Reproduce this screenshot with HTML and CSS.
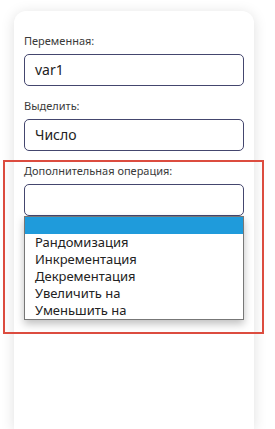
FILE: index.html
```html
<!DOCTYPE html>
<html lang="ru">
<head>
    <meta charset="UTF-8">
    <meta name="viewport" content="width=device-width, initial-scale=1.0">
    <title>Операция</title>
    <link rel="stylesheet" href="styles.css">
</head>
<body>
    <div class="card">
        <div class="field">
            <label class="label">Переменная:</label>
            <div class="input">var1</div>
        </div>

        <div class="field">
            <label class="label">Выделить:</label>
            <div class="input">Число</div>
        </div>

        <div class="field field-open">
            <label class="label">Дополнительная операция:</label>
            <div class="input"></div>

            <!-- открытый список -->
            <div class="dropdown">
                <div class="option selected">&nbsp;</div>
                <div class="option">Рандомизация</div>
                <div class="option">Инкрементация</div>
                <div class="option">Декрементация</div>
                <div class="option">Увеличить на</div>
                <div class="option">Уменьшить на</div>
            </div>

            <div class="highlight"></div>
        </div>
    </div>
</body>
</html>
```

FILE: styles.css
```css
:root {
    --border: #44466e;
    --select: #1f9bdb;
    --mark: #dc4c3f;
}

html, body {
    height: 100%;
}

body {
    font-family: "Noto Sans", sans-serif;
    background-color: #ffffff;
    margin: 0;
    padding: 0;
    overflow: hidden;
}

.card {
    width: 240px;
    height: calc(100% - 11px);
    margin: 11px 0 0 14px;
    padding: 23px 10px 0;
    box-sizing: border-box;
    background: white;
    border-radius: 12px 12px 0 0;
    box-shadow: 0 2px 14px rgba(0,0,0,0.13);
}

.field {
    position: relative;
    margin-bottom: 13px;
}

.label {
    display: block;
    font-size: 11px;
    line-height: 14px;
    color: #3a3a3a;
    margin-bottom: 6px;
}

.input {
    height: 32px;
    box-sizing: border-box;
    border: 1px solid var(--border);
    border-radius: 5px;
    padding: 0 10px;
    font-size: 14px;
    line-height: 30px;
    color: #222;
}

.dropdown {
    position: absolute;
    top: 52px;
    left: 0;
    right: 0;
    background: white;
    border: 1px solid #777;
    box-shadow: 0 4px 8px rgba(0,0,0,0.25);
    z-index: 10;
}

.option {
    height: 17px;
    line-height: 17px;
    padding: 0 10px;
    font-size: 13px;
    color: #222;
}

.option.selected {
    background: var(--select);
}

.highlight {
    position: absolute;
    top: -4px;
    left: -21px;
    width: 257px;
    height: 170px;
    border: 2px solid var(--mark);
    z-index: 20;
}
```
